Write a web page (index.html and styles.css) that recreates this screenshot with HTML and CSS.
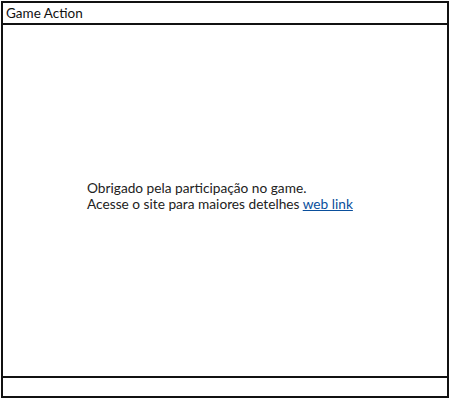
FILE: index.html
```html
<!DOCTYPE html>
<html>
<head>
<meta charset="utf-8">
<link rel="stylesheet" href="styles.css">
</head>
<body>
<div class="window">
  <div class="titlebar">Game Action</div>
  <div class="content">
    <p class="msg">Obrigado pela participação no game.<br>Acesse o site para maiores detelhes <a class="link" href="#">web link</a></p>
  </div>
  <div class="footer"></div>
</div>
</body>
</html>
```
FILE: styles.css
```css
html, body { margin: 0; padding: 0; background: #fff; }
body { font-family: "Lato", "Open Sans", sans-serif; color: #222; }
.window {
  box-sizing: border-box;
  margin: 1px 0 0 1px;
  width: 448px;
  height: 397px;
  border: 2px solid #111;
  display: flex;
  flex-direction: column;
}
.titlebar {
  height: 20px;
  border-bottom: 2px solid #111;
  font-size: 13.5px;
  line-height: 20px;
  padding-left: 3px;
  color: #111;
}
.content {
  flex: 1;
  padding: 155px 0 0 84px;
}
.msg {
  margin: 0;
  font-size: 13.7px;
  line-height: 16px;
}
.link { color: #0a4f9c; text-decoration: underline; }
.footer {
  height: 18px;
  border-top: 2px solid #111;
}
```
